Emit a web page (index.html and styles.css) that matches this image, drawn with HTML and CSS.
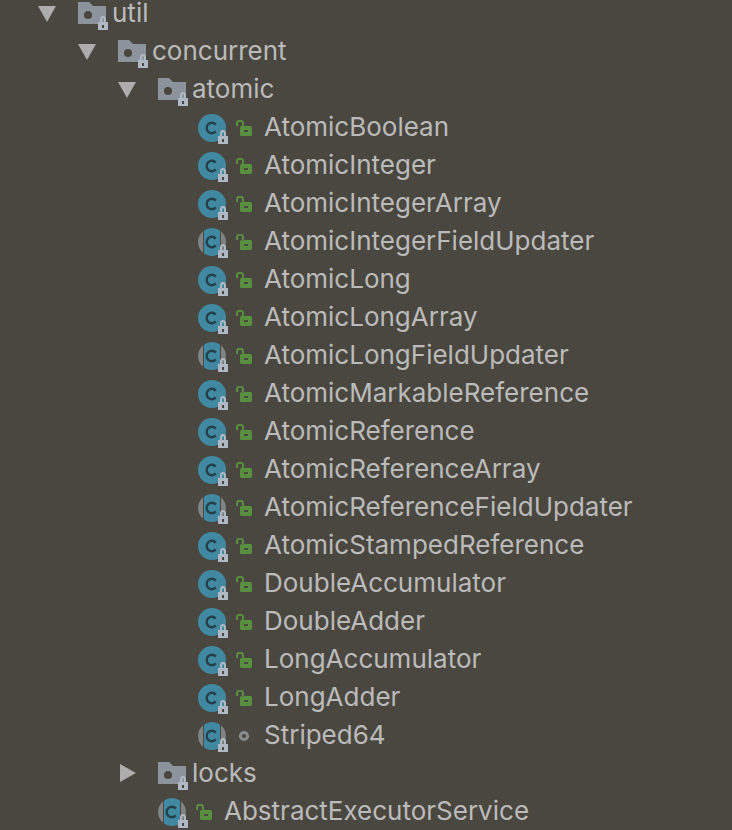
FILE: index.html
```
<!doctype html>
<html lang="en">

<head>
  <meta charset="utf-8">
  <title>Project</title>
  <meta name="viewport" content="width=device-width, initial-scale=1">
  <link rel="stylesheet" href="styles.css">
</head>

<body>

  <!-- icon shapes, used by the rows below -->
  <svg class="defs" width="0" height="0" aria-hidden="true">
    <symbol id="lock" viewBox="0 0 10 14">
      <path d="M3 7V3.500Q3 1 5 1T7 3.500V7" fill="none" stroke="#afb9c6" stroke-width="2"/>
      <path d="M0 6h10v8H0z" fill="#afb9c6"/>
      <path d="M4 9h2v3H4z" fill="#4a4740"/>
    </symbol>
    <symbol id="folder" viewBox="0 0 30 34">
      <path d="M0 6h11l4 4h13v18H0z" fill="#8b949c"/>
      <circle cx="10" cy="19" r="4" fill="#4a4740"/>
      <use href="#lock" x="20" y="20" width="10" height="14"/>
    </symbol>
    <symbol id="letter" viewBox="0 0 30 34">
      <path d="M17.800 14.600A5.200 5.200 0 1 0 17.800 21.400" fill="none" stroke="#24404b" stroke-width="2.400"/>
    </symbol>
    <symbol id="class" viewBox="0 0 30 34">
      <circle cx="14" cy="18" r="14" fill="#4189a1"/>
      <use href="#letter" width="30" height="34"/>
      <use href="#lock" x="20" y="20" width="10" height="14"/>
    </symbol>
    <symbol id="abstract" viewBox="0 0 30 34">
      <path d="M5 7.300A14 14 0 0 0 5 28.700zM23 7.300A14 14 0 0 1 23 28.700z" fill="#7d8386"/>
      <path d="M6 6.500A14 14 0 0 1 22 6.500V29.500A14 14 0 0 1 6 29.500z" fill="#4189a1"/>
      <use href="#letter" width="30" height="34"/>
      <use href="#lock" x="20" y="20" width="10" height="14"/>
    </symbol>
    <symbol id="public" viewBox="0 0 16 34">
      <path d="M1 16V13Q1 11 3 11H5Q7 11 7 13V17" fill="none" stroke="#578f3e" stroke-width="2"/>
      <rect x="4" y="16" width="12" height="10" rx="1.500" fill="#578f3e"/>
      <path d="M8 20h4v2H8z" fill="#4a4740"/>
    </symbol>
    <symbol id="package" viewBox="0 0 16 34">
      <circle cx="8" cy="18" r="3.600" fill="none" stroke="#858d93" stroke-width="3"/>
    </symbol>
    <symbol id="down" viewBox="0 0 18 34">
      <path d="M0 10h18L9 26z" fill="#adadad"/>
    </symbol>
    <symbol id="right" viewBox="0 0 18 34">
      <path d="M2 8v18l16-9z" fill="#adadad"/>
    </symbol>
  </svg>

  <ul class="tree">
    <li>
      <div class="row"><button class="toggle" type="button" aria-label="Collapse util"><svg class="arrow"><use href="#down"/></svg></button><svg class="icon"><use href="#folder"/></svg><span class="name">util</span></div>
      <ul>
        <li>
          <div class="row"><button class="toggle" type="button" aria-label="Collapse concurrent"><svg class="arrow"><use href="#down"/></svg></button><svg class="icon"><use href="#folder"/></svg><span class="name">concurrent</span></div>
          <ul>
            <li>
              <div class="row"><button class="toggle" type="button" aria-label="Collapse atomic"><svg class="arrow"><use href="#down"/></svg></button><svg class="icon"><use href="#folder"/></svg><span class="name">atomic</span></div>
              <ul>
                <li class="row leaf"><svg class="icon"><use href="#class"/></svg><svg class="access"><use href="#public"/></svg><span class="name">AtomicBoolean</span></li>
                <li class="row leaf"><svg class="icon"><use href="#class"/></svg><svg class="access"><use href="#public"/></svg><span class="name">AtomicInteger</span></li>
                <li class="row leaf"><svg class="icon"><use href="#class"/></svg><svg class="access"><use href="#public"/></svg><span class="name">AtomicIntegerArray</span></li>
                <li class="row leaf"><svg class="icon"><use href="#abstract"/></svg><svg class="access"><use href="#public"/></svg><span class="name">AtomicIntegerFieldUpdater</span></li>
                <li class="row leaf"><svg class="icon"><use href="#class"/></svg><svg class="access"><use href="#public"/></svg><span class="name">AtomicLong</span></li>
                <li class="row leaf"><svg class="icon"><use href="#class"/></svg><svg class="access"><use href="#public"/></svg><span class="name">AtomicLongArray</span></li>
                <li class="row leaf"><svg class="icon"><use href="#abstract"/></svg><svg class="access"><use href="#public"/></svg><span class="name">AtomicLongFieldUpdater</span></li>
                <li class="row leaf"><svg class="icon"><use href="#class"/></svg><svg class="access"><use href="#public"/></svg><span class="name">AtomicMarkableReference</span></li>
                <li class="row leaf"><svg class="icon"><use href="#class"/></svg><svg class="access"><use href="#public"/></svg><span class="name">AtomicReference</span></li>
                <li class="row leaf"><svg class="icon"><use href="#class"/></svg><svg class="access"><use href="#public"/></svg><span class="name">AtomicReferenceArray</span></li>
                <li class="row leaf"><svg class="icon"><use href="#abstract"/></svg><svg class="access"><use href="#public"/></svg><span class="name">AtomicReferenceFieldUpdater</span></li>
                <li class="row leaf"><svg class="icon"><use href="#class"/></svg><svg class="access"><use href="#public"/></svg><span class="name">AtomicStampedReference</span></li>
                <li class="row leaf"><svg class="icon"><use href="#class"/></svg><svg class="access"><use href="#public"/></svg><span class="name">DoubleAccumulator</span></li>
                <li class="row leaf"><svg class="icon"><use href="#class"/></svg><svg class="access"><use href="#public"/></svg><span class="name">DoubleAdder</span></li>
                <li class="row leaf"><svg class="icon"><use href="#class"/></svg><svg class="access"><use href="#public"/></svg><span class="name">LongAccumulator</span></li>
                <li class="row leaf"><svg class="icon"><use href="#class"/></svg><svg class="access"><use href="#public"/></svg><span class="name">LongAdder</span></li>
                <li class="row leaf"><svg class="icon"><use href="#abstract"/></svg><svg class="access"><use href="#package"/></svg><span class="name">Striped64</span></li>
              </ul>
            </li>
            <li class="row"><button class="toggle" type="button" aria-label="Expand locks"><svg class="arrow"><use href="#right"/></svg></button><svg class="icon"><use href="#folder"/></svg><span class="name">locks</span></li>
            <li class="row leaf"><svg class="icon"><use href="#abstract"/></svg><svg class="access"><use href="#public"/></svg><span class="name">AbstractExecutorService</span></li>
          </ul>
        </li>
      </ul>
    </li>
  </ul>

</body>

</html>
```

FILE: styles.css
```
body{
    margin: 0;
    background: #4a4740;
    color: #bbb;
    font-family: Inter, "Liberation Sans", sans-serif;
    font-size: 26px;
    line-height: 38px;
    overflow-x: hidden;
}
.defs{
    position: absolute;
}
ul{
    list-style: none;
    margin: 0;
    padding: 0 0 0 40px;
}
/* first row is partly scrolled out of the panel */
.tree{
    margin-top: -6px;
    padding-left: 38px;
}
.row{
    display: flex;
    align-items: center;
    height: 38px;
    white-space: nowrap;
}
.leaf{
    padding-left: 40px;
}
.toggle{
    display: flex;
    flex: none;
    width: 40px;
    padding: 0;
    border: 0;
    background: none;
    cursor: pointer;
}
.arrow{
    width: 18px;
    height: 34px;
}
.icon{
    flex: none;
    width: 30px;
    height: 34px;
}
.access{
    flex: none;
    width: 16px;
    height: 34px;
    margin: 0 8px;
}
.name{
    margin-left: 4px;
}
```
